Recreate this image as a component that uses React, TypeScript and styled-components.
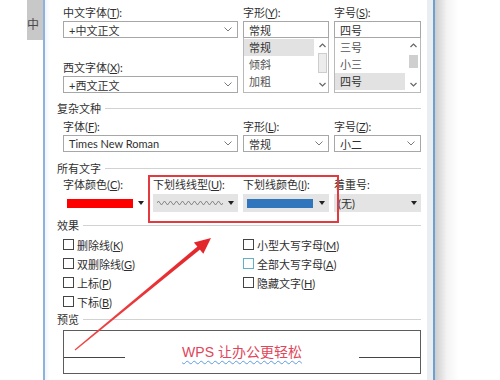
import styled, { createGlobalStyle } from "styled-components";

const GlobalStyle = createGlobalStyle`
  body {
    margin: 0;
    background: #fff;
    font-family: "Lato", "Noto Sans CJK SC", sans-serif;
  }
`;

const Screen = styled.div`
  position: relative;
  width: 500px;
  height: 380px;
  display: flex;
  overflow: hidden;
  background: #fff;
  color: #303030;
  font-family: "Lato", "Noto Sans CJK SC", sans-serif;
  font-size: 11px;
  text-autospace: no-autospace;
`;

const DocStrip = styled.div`
  width: 43px;
  flex: none;
`;

const DocText = styled.div`
  margin-left: 27px;
  width: 16px;
  height: 40px;
  background: #c8c8c8;
  color: #4a4a4a;
  font-family: "Liberation Serif", "Noto Sans CJK SC", serif;
  font-size: 12px;
  line-height: 16px;
  padding-top: 17px;
  box-sizing: border-box;
`;

const Dialog = styled.div`
  display: flex;
  flex: none;
  border-left: 2px solid #8db3da;
  border-right: 2px solid #6f9fd0;
`;

const Body = styled.div`
  width: 382px;
  box-sizing: border-box;
  padding: 5px 6px 0 18px;
  background: linear-gradient(to right, #f1f5f9, #fff 5px);
`;

const SideStrip = styled.div`
  width: 6px;
  background: #e9eef3;
`;

const Shade = styled.div`
  flex: 1;
  background: linear-gradient(to right, #cdcdcd, #f4f4f4 12px, #fff 24px);
`;

const FourCols = styled.div<{ $top?: number }>`
  display: grid;
  grid-template-columns: 85px 85px 86px 87px;
  column-gap: 5px;
  margin-top: ${(p) => p.$top ?? 0}px;
`;

const Field = styled.div<{ $span?: number }>`
  display: flex;
  flex-direction: column;
  grid-column: span ${(p) => p.$span ?? 1};
  min-width: 0;
`;

const Label = styled.div<{ $top?: number }>`
  height: 16px;
  line-height: 16px;
  white-space: nowrap;
  margin-top: ${(p) => p.$top ?? 0}px;
`;

const Key = styled.span`
  text-decoration: underline;
  text-underline-offset: 1px;
`;

const Combo = styled.div`
  height: 17px;
  box-sizing: border-box;
  border: 1px solid #a7a7a7;
  background: #fff;
  display: flex;
  align-items: center;
  justify-content: space-between;
  padding: 0 5px 0 5px;
  white-space: nowrap;
`;

const ListBox = styled.div`
  height: 55px;
  box-sizing: border-box;
  border: 1px solid #b9b9b9;
  border-top: none;
  display: flex;
  padding: 1px 1px 0 0;
`;

const Items = styled.div`
  width: 70px;
  margin-right: 3px;
`;

const Item = styled.div<{ $selected?: boolean }>`
  height: 17px;
  line-height: 17px;
  padding-left: 5px;
  background: ${(p) => (p.$selected ? "#e2e2e2" : "transparent")};
  color: ${(p) => (p.$selected ? "#303030" : "#555")};
`;

const Scrollbar = styled.div`
  width: 10px;
  display: flex;
  flex-direction: column;
  align-items: center;
  justify-content: space-between;
  padding: 4px 0 5px;
`;

const Thumb = styled.div<{ $h: number; $mt: number; $dark?: boolean }>`
  width: 9px;
  height: ${(p) => p.$h}px;
  margin-top: ${(p) => p.$mt}px;
  margin-bottom: auto;
  box-sizing: border-box;
  background: ${(p) => (p.$dark ? "#cfcfcf" : "#ececec")};
  border: 1px solid ${(p) => (p.$dark ? "#cfcfcf" : "#cdcdcd")};
`;

const SectionHead = styled.div<{ $top?: number }>`
  display: flex;
  align-items: center;
  gap: 4px;
  height: 16px;
  margin-left: -6px;
  margin-top: ${(p) => p.$top ?? 0}px;
  &::after {
    content: "";
    flex: 1;
    border-top: 1px solid #d2d2d2;
  }
`;

const ColorBox = styled.div<{ $plain?: boolean }>`
  height: 18px;
  margin-top: 1px;
  display: flex;
  align-items: center;
  justify-content: space-between;
  padding: 0 4px 0 4px;
  background: ${(p) => (p.$plain ? "#fff" : "#e4e4e4")};
  white-space: nowrap;
`;

const Swatch = styled.div<{ $color: string }>`
  width: 66px;
  height: 9px;
  background: ${(p) => p.$color};
`;

const DropTriangle = styled.div`
  width: 0;
  height: 0;
  border-left: 3.5px solid transparent;
  border-right: 3.5px solid transparent;
  border-top: 4px solid #222;
`;

const CheckGrid = styled.div`
  display: grid;
  grid-template-columns: 180px 1fr;
  margin-top: 2px;
`;

const CheckCol = styled.div`
  display: flex;
  flex-direction: column;
`;

const CheckRow = styled.div`
  height: 19px;
  display: flex;
  align-items: center;
  white-space: nowrap;
`;

const Box = styled.div<{ $focus?: boolean }>`
  width: 11px;
  height: 11px;
  margin-right: 3px;
  box-sizing: border-box;
  border: 1px solid ${(p) => (p.$focus ? "#5fb3c4" : "#444")};
  background: #fff;
`;

const Preview = styled.div`
  margin-top: 3px;
  height: 44px;
  box-sizing: border-box;
  border: 1px solid #5c5c5c;
  display: grid;
  grid-template-columns: 61px 1fr 61px;
  align-items: start;
`;

const BaseRule = styled.div`
  margin-top: 26px;
  border-top: 1px solid #444;
`;

const Sample = styled.div`
  margin-top: 12px;
  line-height: 18px;
  text-align: center;
  color: #e0465a;
  font-family: "Liberation Sans", "Noto Sans CJK SC", sans-serif;
  font-size: 14px;
  text-decoration: underline wavy #5b9be0;
  text-decoration-thickness: 1px;
  text-underline-offset: 3px;
`;

const Highlight = styled.div`
  position: absolute;
  left: 148px;
  top: 175px;
  width: 191px;
  height: 48px;
  box-sizing: border-box;
  border: 2px solid #e33a40;
`;

const ArrowSvg = styled.svg`
  position: absolute;
  left: 70px;
  top: 232px;
  width: 150px;
  height: 125px;
  pointer-events: none;
`;

const Chevron = () => (
  <svg width={8} height={5} viewBox="0 0 8 5">
    <path d="M0.5 0.5 L4 4 L7.5 0.5" fill="none" stroke="#7a7a7a" strokeWidth="1" />
  </svg>
);

const ChevronUp = () => (
  <svg width={7} height={5} viewBox="0 0 7 5">
    <path d="M0.5 4 L3.5 1 L6.5 4" fill="none" stroke="#666" strokeWidth="1.2" />
  </svg>
);

const ChevronDown = () => (
  <svg width={7} height={5} viewBox="0 0 7 5">
    <path d="M0.5 1 L3.5 4 L6.5 1" fill="none" stroke="#666" strokeWidth="1.2" />
  </svg>
);

const Wave = () => {
  let d = "M0 3";
  for (let i = 0; i < 22; i++) {
    d += ` L${i * 3 + 1.5} ${i % 2 === 0 ? 1 : 5} L${i * 3 + 3} 3`;
  }
  return (
    <svg width={66} height={6} viewBox="0 0 66 6">
      <path d={d} fill="none" stroke="#7d7d7d" strokeWidth="0.9" />
    </svg>
  );
};

const App = () => {
  return (
    <Screen>
      <GlobalStyle />
      <DocStrip>
        <DocText>中</DocText>
      </DocStrip>
      <Dialog>
        <Body>
          <FourCols>
            <Field $span={2}>
              <Label>
                中文字体(<Key>T</Key>):
              </Label>
              <Combo>
                +中文正文
                <Chevron />
              </Combo>
              <Label $top={22}>
                西文字体(<Key>X</Key>):
              </Label>
              <Combo>
                +西文正文
                <Chevron />
              </Combo>
            </Field>
            <Field>
              <Label>
                字形(<Key>Y</Key>):
              </Label>
              <Combo>常规</Combo>
              <ListBox>
                <Items>
                  <Item $selected>常规</Item>
                  <Item>倾斜</Item>
                  <Item>加粗</Item>
                </Items>
                <Scrollbar>
                  <ChevronUp />
                  <Thumb $h={20} $mt={5} />
                  <ChevronDown />
                </Scrollbar>
              </ListBox>
            </Field>
            <Field>
              <Label>
                字号(<Key>S</Key>):
              </Label>
              <Combo>四号</Combo>
              <ListBox>
                <Items>
                  <Item>三号</Item>
                  <Item>小三</Item>
                  <Item $selected>四号</Item>
                </Items>
                <Scrollbar>
                  <ChevronUp />
                  <Thumb $h={13} $mt={7} $dark />
                  <ChevronDown />
                </Scrollbar>
              </ListBox>
            </Field>
          </FourCols>

          <SectionHead $top={7}>复杂文种</SectionHead>
          <FourCols $top={3}>
            <Field $span={2}>
              <Label>
                字体(<Key>F</Key>):
              </Label>
              <Combo>
                Times New Roman
                <Chevron />
              </Combo>
            </Field>
            <Field>
              <Label>
                字形(<Key>L</Key>):
              </Label>
              <Combo>
                常规
                <Chevron />
              </Combo>
            </Field>
            <Field>
              <Label>
                字号(<Key>Z</Key>):
              </Label>
              <Combo>
                小二
                <Chevron />
              </Combo>
            </Field>
          </FourCols>

          <SectionHead $top={8}>所有文字</SectionHead>
          <FourCols $top={1}>
            <Field>
              <Label>
                字体颜色(<Key>C</Key>):
              </Label>
              <ColorBox $plain>
                <Swatch $color="#ff0000" />
                <DropTriangle />
              </ColorBox>
            </Field>
            <Field>
              <Label>
                下划线线型(<Key>U</Key>):
              </Label>
              <ColorBox>
                <Wave />
                <DropTriangle />
              </ColorBox>
            </Field>
            <Field>
              <Label>
                下划线颜色(<Key>I</Key>):
              </Label>
              <ColorBox>
                <Swatch $color="#2f76bd" />
                <DropTriangle />
              </ColorBox>
            </Field>
            <Field>
              <Label>着重号:</Label>
              <ColorBox>
                (无)
                <DropTriangle />
              </ColorBox>
            </Field>
          </FourCols>

          <SectionHead $top={5}>效果</SectionHead>
          <CheckGrid>
            <CheckCol>
              <CheckRow>
                <Box />
                <span>
                  删除线(<Key>K</Key>)
                </span>
              </CheckRow>
              <CheckRow>
                <Box />
                <span>
                  双删除线(<Key>G</Key>)
                </span>
              </CheckRow>
              <CheckRow>
                <Box />
                <span>
                  上标(<Key>P</Key>)
                </span>
              </CheckRow>
              <CheckRow>
                <Box />
                <span>
                  下标(<Key>B</Key>)
                </span>
              </CheckRow>
            </CheckCol>
            <CheckCol>
              <CheckRow>
                <Box />
                <span>
                  小型大写字母(<Key>M</Key>)
                </span>
              </CheckRow>
              <CheckRow>
                <Box $focus />
                <span>
                  全部大写字母(<Key>A</Key>)
                </span>
              </CheckRow>
              <CheckRow>
                <Box />
                <span>
                  隐藏文字(<Key>H</Key>)
                </span>
              </CheckRow>
            </CheckCol>
          </CheckGrid>

          <SectionHead>预览</SectionHead>
          <Preview>
            <BaseRule />
            <Sample>WPS 让办公更轻松</Sample>
            <BaseRule />
          </Preview>
        </Body>
        <SideStrip />
      </Dialog>
      <Shade />

      <Highlight />
      <ArrowSvg viewBox="70 232 150 125">
        <defs>
          <linearGradient id="arrowRed" x1="0" y1="1" x2="1" y2="0">
            <stop offset="0" stopColor="#f04848" />
            <stop offset="1" stopColor="#e3262c" />
          </linearGradient>
        </defs>
        <polygon
          points="74.6,349.6 75.4,350.4 201.3,248.6 198.7,245.4"
          fill="url(#arrowRed)"
        />
        <polygon points="211,238 203.3,253.8 193.9,242.6" fill="#e3262c" />
      </ArrowSvg>
    </Screen>
  );
};

export default App;
